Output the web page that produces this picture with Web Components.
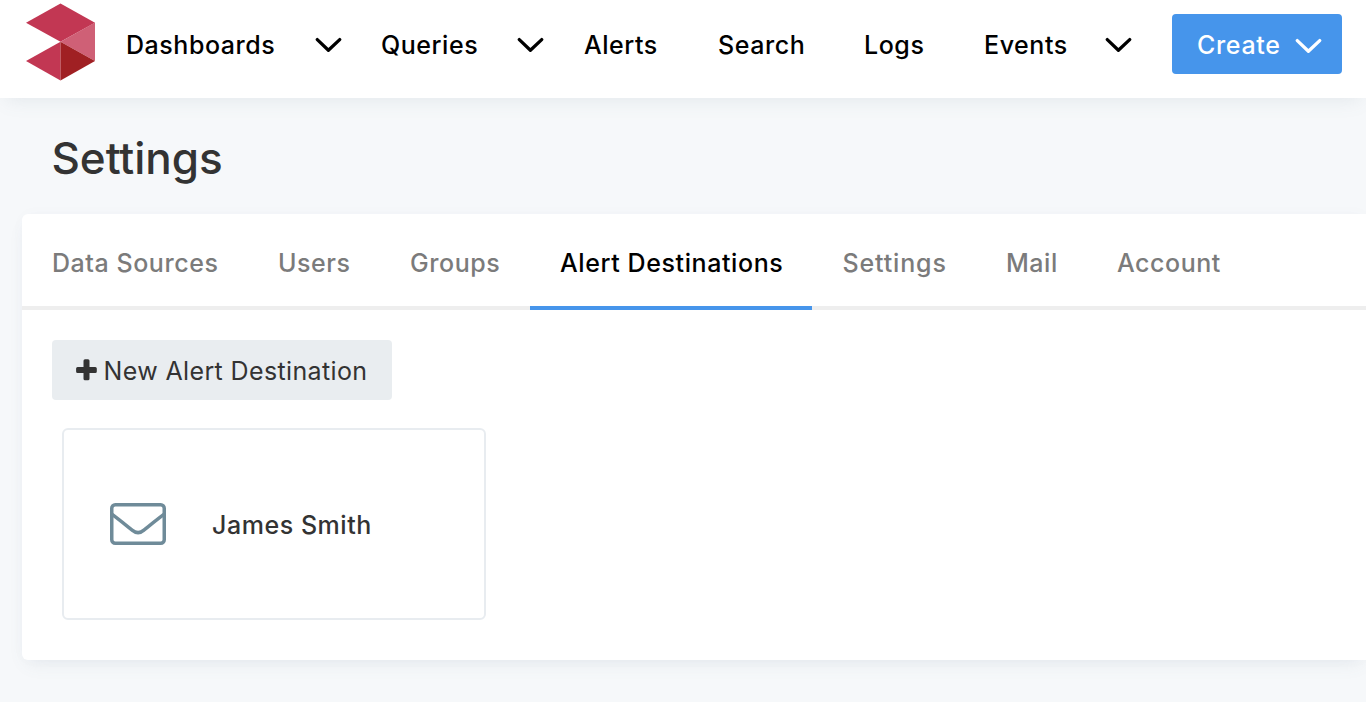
<!DOCTYPE html>
<html lang="en">
<head>
<meta charset="utf-8">
<title>Settings</title>
<style>
html, body { margin: 0; height: 100%; overflow: hidden; background: #f6f8fa; }
</style>
</head>
<body>
<settings-app></settings-app>
<script>
const define = (name, html, setup) => customElements.define(name, class extends HTMLElement {
  constructor() {
    super();
    const t = document.createElement('template');
    t.innerHTML = html;
    this.attachShadow({ mode: 'open' }).append(t.content.cloneNode(true));
  }
  connectedCallback() { if (setup) setup(this, this.shadowRoot); }
});

define('app-logo', `
<style>:host{display:block;width:70px;height:78px;flex:none} svg{display:block}</style>
<svg width="70" height="78" viewBox="0 0 70 78">
  <path fill="#c23753" d="M0 19.700 34.500 .4 69 19.700 34.500 38.800Z"/>
  <path fill="#c23753" d="M0 58 34.500 38.800V77.500Z"/>
  <path fill="#cf6076" d="M69 19.500V58L34.500 38.800Z"/>
  <path fill="#a02023" d="M34.500 38.800 69 58 34.500 77.500Z"/>
</svg>`);

define('chevron-icon', `
<style>:host{display:block;width:27px;height:16px;flex:none} svg{display:block}</style>
<svg width="27" height="16" viewBox="0 0 27 16" fill="none" stroke="currentColor" stroke-width="3.300" stroke-linecap="round" stroke-linejoin="round"><path d="M2.300 2.600 13.400 13.200 24.700 2.600"/></svg>`);

define('nav-item', `
<style>
:host{display:flex;align-items:center;flex:none;color:#000;height:60px;font-weight:480;white-space:nowrap}
.label{flex:none;line-height:62px}
chevron-icon{display:none;margin-left:40px}
:host([menu]) chevron-icon{display:block}
</style>
<span class="label"><slot></slot></span><chevron-icon></chevron-icon>`, (el, root) => {
  el.style.width = el.getAttribute('width') + 'px';
  const label = root.querySelector('.label');
  if (el.hasAttribute('label-width')) label.style.width = el.getAttribute('label-width') + 'px';
});

define('create-button', `
<style>
:host{display:flex;box-sizing:border-box;align-items:center;width:170px;height:60px;padding:2px 0 0 25px;border-radius:4px;background:#4695eb;color:#fff;flex:none}
.label{width:98px;font-weight:450;letter-spacing:.65px}
chevron-icon{margin-top:2px}
</style><span class="label"><slot></slot></span><chevron-icon></chevron-icon>`);

define('app-header', `
<style>
:host{display:flex;box-sizing:border-box;height:98px;padding:3px 24px 0 26px;background:#fff;box-shadow:0 8px 18px -6px rgba(102,125,140,.13);position:relative}
nav{display:flex;padding:12px 0 0 30px}
create-button{margin-top:11px}
</style>
<app-logo></app-logo>
<nav>
  <nav-item menu width="255" label-width="149">Dashboards</nav-item>
  <nav-item menu width="203" label-width="96">Queries</nav-item>
  <nav-item width="134">Alerts</nav-item>
  <nav-item width="146">Search</nav-item>
  <nav-item width="120">Logs</nav-item>
  <nav-item menu width="188" label-width="81">Events</nav-item>
</nav>
<create-button>Create</create-button>`);

define('tab-item', `
<style>
:host{display:block;box-sizing:border-box;height:96px;padding:0 0 0 30px;border-bottom:4px solid #eee;line-height:98px;color:#7b7b7b;font-weight:480;white-space:nowrap;flex:none}
:host([active]){color:#000;border-color:#4695eb;letter-spacing:.6px}
:host([wide]){padding-left:30.500px;letter-spacing:.85px}
</style><slot></slot>`, el => { el.style.width = el.getAttribute('width') + 'px'; });

define('tab-bar', `
<style>
:host{display:flex}
.rest{flex:1;border-bottom:4px solid #eee}
</style><slot></slot><div class="rest"></div>`);

define('add-button', `
<style>
:host{display:flex;box-sizing:border-box;align-items:center;width:340px;height:60px;padding-left:24px;border-radius:4px;background:#e9edf0;color:#333}
svg{flex:none;margin-right:6.500px}
span{white-space:nowrap;padding-top:2px;letter-spacing:.37px}
</style>
<svg width="21" height="22" viewBox="0 0 21 22" fill="#333"><path d="M9 0.300h3a1.500 1.500 0 0 1 1.500 1.500V7.900h5.800A1.500 1.500 0 0 1 20.800 9.400v3a1.500 1.500 0 0 1-1.500 1.500H13.500v5.800a1.500 1.500 0 0 1-1.500 1.500H9a1.500 1.500 0 0 1-1.500-1.500V13.900H1.600A1.500 1.500 0 0 1 .1 12.400v-3A1.500 1.500 0 0 1 1.600 7.900H7.500V1.800A1.500 1.500 0 0 1 9 .3Z"/></svg>
<span><slot></slot></span>`);

define('destination-card', `
<style>
:host{display:flex;box-sizing:border-box;align-items:center;width:424px;height:192px;border:2px solid #e8ecf0;border-radius:6px;padding-left:46px;color:#333;font-weight:490}
svg{flex:none;margin-right:46px}
span{padding-top:2px}
</style>
<svg width="56" height="42" viewBox="0 0 56 42" fill="none" stroke="#6f8b99" stroke-width="3.500"><rect x="1.750" y="1.750" width="52.500" height="38.500" rx="3.500"/><path d="M1.800 11.200C8 15.800 16.300 22.500 22.100 27.100Q28.100 32.100 33.900 27.100C39.700 22.500 48 15.800 54.200 11.200"/></svg>
<span><slot></slot></span>`);

define('settings-panel', `
<style>
:host{display:block;height:446px;margin:30px 0 0 22px;background:#fff;border-radius:6px 0 0 6px;box-shadow:0 8px 18px -6px rgba(102,125,140,.12),0 0 18px rgba(102,125,140,.02)}
.body{padding:30px 0 0 30px}
destination-card{margin:28px 0 0 10px}
</style>
<tab-bar>
  <tab-item width="226">Data Sources</tab-item>
  <tab-item width="132">Users</tab-item>
  <tab-item width="150">Groups</tab-item>
  <tab-item width="282" active>Alert Destinations</tab-item>
  <tab-item width="164" wide>Settings</tab-item>
  <tab-item width="111">Mail</tab-item>
  <tab-item width="162">Account</tab-item>
</tab-bar>
<div class="body">
  <add-button>New Alert Destination</add-button>
  <destination-card>James Smith</destination-card>
</div>`);

define('settings-app', `
<style>
:host{display:block;height:702px;overflow:hidden;background:#f6f8fa;font:400 25px/1.2 Inter,sans-serif;letter-spacing:.55px;color:#333}
h1{margin:0;padding:35px 0 0 51.500px;height:51px;font-size:44px;line-height:50px;font-weight:500;letter-spacing:-.05px}
</style>
<app-header></app-header>
<h1>Settings</h1>
<settings-panel></settings-panel>`);
</script>
</body>
</html>
